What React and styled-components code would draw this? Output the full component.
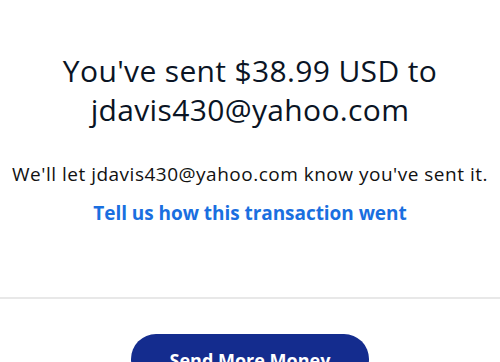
import React from 'react'
import styled, { createGlobalStyle } from 'styled-components'

const Global = createGlobalStyle`
  html, body {
    margin: 0;
    padding: 0;
    background: #fff;
  }
  body {
    font-family: "Open Sans", "Noto Sans", sans-serif;
    color: #001435;
  }
`

const Page = styled.div`
  width: 500px;
  height: 362px;
  overflow: hidden;
  display: flex;
  flex-direction: column;
  align-items: center;
`

const Heading = styled.h1`
  margin: 51px 0 0;
  font-size: 30px;
  font-weight: 400;
  line-height: 39px;
  text-align: center;
  color: #0a1424;
  letter-spacing: 0.35px;
`

const Note = styled.p`
  margin: 33px 0 0;
  font-size: 19px;
  line-height: 24px;
  text-align: center;
  color: #111;
  letter-spacing: 0.5px;
  white-space: nowrap;
`

const FeedbackLink = styled.a`
  margin-top: 15px;
  font-size: 19px;
  font-weight: 700;
  line-height: 24px;
  color: #1a6fe0;
  text-decoration: none;
  letter-spacing: -0.05px;
  cursor: pointer;
`

const Divider = styled.hr`
  align-self: stretch;
  margin: 72px 0 0;
  border: none;
  border-top: 2px solid #e8e8e8;
`

const PrimaryButton = styled.button`
  margin-top: 35px;
  width: 238px;
  height: 50px;
  flex-shrink: 0;
  border: none;
  border-radius: 25px;
  background: #142c8e;
  color: #fff;
  font-family: inherit;
  font-size: 18px;
  font-weight: 700;
  padding-top: 2px;
  cursor: pointer;
`

export default function App() {
  return (
    <>
      <Global />
      <Page>
        <Heading>
          You've sent $38.99 USD to
          <br />
          jdavis430@yahoo.com
        </Heading>
        <Note>We'll let jdavis430@yahoo.com know you've sent it.</Note>
        <FeedbackLink>Tell us how this transaction went</FeedbackLink>
        <Divider />
        <PrimaryButton>Send More Money</PrimaryButton>
      </Page>
    </>
  )
}
